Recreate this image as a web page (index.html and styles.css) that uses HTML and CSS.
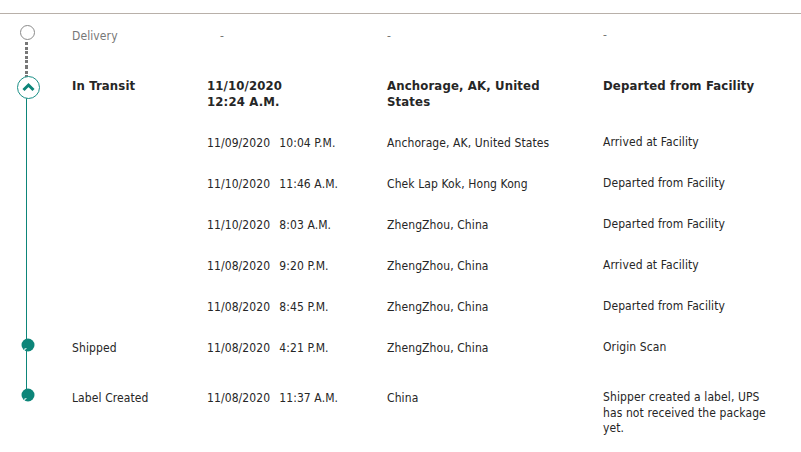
FILE: index.html
```html
<!DOCTYPE html>
<html lang="en">
<head>
<meta charset="utf-8">
<title>Shipment Progress</title>
<link rel="stylesheet" href="styles.css">
</head>
<body>
<div class="topbar"></div>
<div class="progress">
  <div class="row gap-after future">
    <div class="c mark mark-delivery">
      <svg class="ring" width="15" height="15" viewBox="0 0 15 15"><circle cx="7.5" cy="7.5" r="7" fill="#fff" stroke="#8a8a8a" stroke-width="1"/></svg>
    </div>
    <div class="c status">Delivery</div>
    <div class="c when">-</div>
    <div class="c where">-</div>
    <div class="c what">-</div>
  </div>

  <div class="row current">
    <div class="c mark mark-transit">
      <svg class="ring-big" width="23" height="23" viewBox="0 0 23 23"><circle cx="11.5" cy="11.5" r="11" fill="#fff" stroke="#1a8f86" stroke-width="1"/><path d="M6.5 14 L11.5 9 L16.5 14" fill="none" stroke="#0d8579" stroke-width="3" stroke-linejoin="miter"/></svg>
    </div>
    <div class="c status">In Transit</div>
    <div class="c when"><span>11/10/2020</span><span>12:24 A.M.</span></div>
    <div class="c where">Anchorage, AK, United States</div>
    <div class="c what">Departed from Facility</div>
  </div>

  <div class="row">
    <div class="c mark line"></div>
    <div class="c status"></div>
    <div class="c when"><span>11/09/2020</span><span>10:04 P.M.</span></div>
    <div class="c where">Anchorage, AK, United States</div>
    <div class="c what">Arrived at Facility</div>
  </div>

  <div class="row">
    <div class="c mark line"></div>
    <div class="c status"></div>
    <div class="c when"><span>11/10/2020</span><span>11:46 A.M.</span></div>
    <div class="c where">Chek Lap Kok, Hong Kong</div>
    <div class="c what">Departed from Facility</div>
  </div>

  <div class="row">
    <div class="c mark line"></div>
    <div class="c status"></div>
    <div class="c when"><span>11/10/2020</span><span>8:03 A.M.</span></div>
    <div class="c where">ZhengZhou, China</div>
    <div class="c what">Departed from Facility</div>
  </div>

  <div class="row">
    <div class="c mark line"></div>
    <div class="c status"></div>
    <div class="c when"><span>11/08/2020</span><span>9:20 P.M.</span></div>
    <div class="c where">ZhengZhou, China</div>
    <div class="c what">Arrived at Facility</div>
  </div>

  <div class="row">
    <div class="c mark line"></div>
    <div class="c status"></div>
    <div class="c when"><span>11/08/2020</span><span>8:45 P.M.</span></div>
    <div class="c where">ZhengZhou, China</div>
    <div class="c what">Departed from Facility</div>
  </div>

  <div class="row gap-after">
    <div class="c mark line">
      <svg class="dot" width="14" height="14" viewBox="0 0 14 14"><circle cx="7" cy="7" r="6.5" fill="#0d8579"/><path d="M3 13 L3.5 10.5 L6 10 Z" fill="#fff"/></svg>
    </div>
    <div class="c status">Shipped</div>
    <div class="c when"><span>11/08/2020</span><span>4:21 P.M.</span></div>
    <div class="c where">ZhengZhou, China</div>
    <div class="c what">Origin Scan</div>
  </div>

  <div class="row">
    <div class="c mark line-end">
      <svg class="dot" width="14" height="14" viewBox="0 0 14 14"><circle cx="7" cy="7" r="6.5" fill="#0d8579"/><path d="M3 13 L3.5 10.5 L6 10 Z" fill="#fff"/></svg>
    </div>
    <div class="c status">Label Created</div>
    <div class="c when"><span>11/08/2020</span><span>11:37 A.M.</span></div>
    <div class="c where">China</div>
    <div class="c what">Shipper created a label, UPS has not received the package yet.</div>
  </div>
</div>
</body>
</html>
```

FILE: styles.css
```css
html, body {
  margin: 0;
  padding: 0;
  background: #fff;
}

body {
  font-family: "DejaVu Sans Condensed", "DejaVu Sans", Verdana, sans-serif;
  font-size: 12px;
  line-height: 16px;
  color: #262626;
  letter-spacing: 0.1px;
}

.topbar {
  height: 13px;
  border-bottom: 1px solid #b8b0a9;
}

.progress {
  padding-top: 2px;
}

.row {
  display: grid;
  grid-template-columns: 72px 135px 180px 216px 182px;
}

.c {
  padding: 12px 0 13px;
}

.row.gap-after .c {
  padding-bottom: 22px;
}

.mark {
  position: relative;
}

.mark svg {
  display: block;
  position: relative;
  z-index: 1;
}

.ring {
  margin: -3px 0 0 20px;
}

.ring-big {
  margin: -2px 0 0 17px;
}

.dot {
  margin: -2px 0 0 21px;
}

/* connecting track */
.mark-delivery::after {
  content: "";
  position: absolute;
  left: 25px;
  width: 3px;
  top: 26px;
  bottom: 0;
  background: repeating-linear-gradient(to bottom, #777 0 3px, transparent 3px 4.6px);
}

.mark-transit::before {
  content: "";
  position: absolute;
  left: 25px;
  width: 3px;
  top: 0;
  height: 11px;
  background: repeating-linear-gradient(to bottom, #777 0 3px, transparent 3px 4.6px);
}

.mark-transit::after,
.line::after,
.line-end::after {
  content: "";
  position: absolute;
  left: 26px;
  width: 1px;
  top: 0;
  bottom: 0;
  background: #0d8579;
}

.mark-transit::after {
  top: 32px;
}

.line-end::after {
  bottom: auto;
  height: 14px;
}

.future .c {
  color: #777;
}

.future .when {
  padding-left: 13px;
}

.when span + span {
  margin-left: 9px;
}

.current .c {
  font-weight: bold;
  font-size: 13px;
  letter-spacing: 0.15px;
}

.current .when span {
  display: block;
  margin-left: 0;
}

.current .where {
  padding-right: 28px;
}

.what {
  line-height: 15.5px;
  padding-right: 6px;
}

.current .what {
  line-height: 16px;
}
```
